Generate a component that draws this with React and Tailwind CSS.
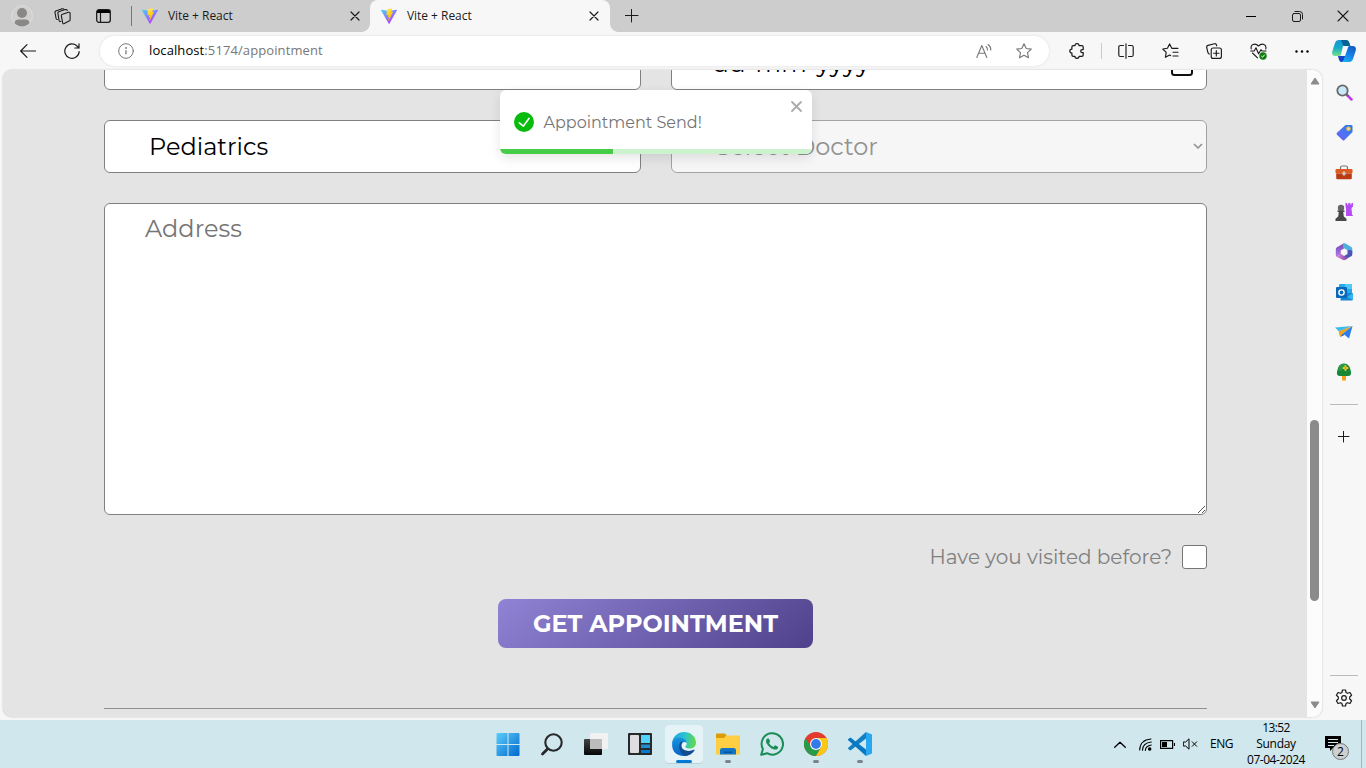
import React from "react";

const line = { fill: "none", stroke: "currentColor", strokeLinecap: "round", strokeLinejoin: "round" };

function Cell({ className = "w-11", children }) {
  return <div className={"flex shrink-0 items-center justify-center " + className}>{children}</div>;
}

function ViteLogo() {
  return (
    <svg width="16" height="16" viewBox="0 0 16 16" className="shrink-0">
      <defs>
        <linearGradient id="va" x1="0" y1="0" x2=".7" y2="1"><stop stopColor="#41d1ff" /><stop offset="1" stopColor="#bd34fe" /></linearGradient>
        <linearGradient id="vb" x1=".4" y1="0" x2=".6" y2="1"><stop stopColor="#ffea83" /><stop offset=".2" stopColor="#ffdd35" /><stop offset="1" stopColor="#ffa800" /></linearGradient>
      </defs>
      <path d="M15.9 2.4 8.5 15.6a.5.5 0 0 1-.9 0L.1 2.4a.5.5 0 0 1 .5-.7L8 3l7.400-1.300a.5.5 0 0 1 .5.7Z" fill="url(#va)" />
      <path d="M11.500.1 6 1.200a.2.2 0 0 0-.2.2l-.3 5.700c0 .2.1.3.3.2l1.500-.3-.5 2.200c0 .2.1.3.3.3l.9-.3-.7 3.400c0 .3.300.4.400.1l4.300-8.600c.1-.1 0-.3-.2-.3l-1.600.3 1-3.700c0-.2-.1-.4-.4-.3Z" fill="url(#vb)" />
    </svg>
  );
}

function X({ size = 8, w = 1.2 }) {
  return <svg width={size} height={size} viewBox="0 0 8 8" className="overflow-visible"><path d="M0 0 8 8M8 0 0 8" {...line} strokeWidth={w} /></svg>;
}

function TabStrip() {
  return (
    <div className="flex h-8 bg-[#cdcdcd] text-xs text-[#1b1b1b]">
      <Cell className="w-[44px]">
        <svg width="22" height="22" viewBox="0 0 22 22"><circle cx="11" cy="11" r="10.500" fill="#d2d0ce" stroke="#dedcd9" /><circle cx="11" cy="8" r="5" fill="#8a8886" /><path d="M3.500 18C4 15 6 14.500 8 14.500h6c2 0 4 .5 4.500 3.500A10 10 0 0 1 3.500 18Z" fill="#8a8886" /></svg>
      </Cell>
      <Cell className="w-[36px]">
        <svg width="17" height="17" viewBox="0 0 17 17" {...line} strokeWidth="1.100"><path d="m8.500 6.200 6-1.900q1.600-.4 1.600 1v6.400q0 1-1 1.400l-4.800 2.400q-1.500.7-1.700-.8L7.300 7.600q-.1-1 1.200-1.400" /><path d="M6.800 13.500q-1.500.3-1.700-1L3.900 5.300q-.1-1 .9-1.500L11 1.600q1.800-.5 2.300.9" /><path d="M3.500 11.500q-1.200.1-1.400-1L1 4.600q-.2-1 .8-1.600L7.500.900Q9 .5 9.600 1" /></svg>
      </Cell>
      <Cell className="w-[47px]">
        <svg width="15" height="14" viewBox="0 0 15 14"><rect x=".7" y=".7" width="13.600" height="12.600" rx="2.200" {...line} strokeWidth="1.300" /><path d="M1 4V2.500Q1 1 2.500 1h10Q14 1 14 2.500V4Z" /><path d="M4.500 4v9" stroke="currentColor" strokeWidth="1.200" /></svg>
      </Cell>
      <div className="flex w-[243px] items-center pl-1">
        <div className="h-5 w-px bg-[#777]" />
        <div className="ml-[10px] flex"><ViteLogo /></div>
        <span className="ml-[10px] w-[64px] font-['Open_Sans',sans-serif] tracking-[-0.04px] whitespace-nowrap">Vite + React</span>
        <span className="ml-[119px]"><X /></span>
      </div>
      <div className="relative flex w-[240px] items-center rounded-t-lg bg-[#f7f7f7] pl-[11px] before:absolute before:bottom-0 before:-left-2 before:size-2 before:bg-[radial-gradient(circle_at_0_0,#cdcdcd_7.500px,#f7f7f7_8px)] after:absolute after:-right-2 after:bottom-0 after:size-2 after:bg-[radial-gradient(circle_at_100%_0,#cdcdcd_7.500px,#f7f7f7_8px)]">
        <ViteLogo />
        <span className="ml-[10px] w-[64px] font-['Open_Sans',sans-serif] tracking-[-0.04px] whitespace-nowrap">Vite + React</span>
        <span className="ml-[119px]"><X /></span>
      </div>
      <Cell className="w-[43px]"><svg width="14" height="14" viewBox="0 0 14 14"><path d="M6.500 0v13M0 6.500h13" {...line} /></svg></Cell>
      <div className="ml-auto flex">
        <Cell className="w-[46px]"><div className="h-px w-[10px] bg-black" /></Cell>
        <Cell className="w-[46px]"><svg width="11" height="11" viewBox="0 0 11 11" {...line}><rect x=".5" y="2.500" width="8" height="8" rx="1.500" /><path d="M3 .5h4.500a3 3 0 0 1 3 3V8" /></svg></Cell>
        <Cell className="w-[46px]"><X size={10} w={0.9} /></Cell>
      </div>
    </div>
  );
}

function Toolbar() {
  return (
    <div className="flex h-[38px] items-center bg-[#f7f7f7] text-[#1b1b1b]">
      <Cell className="w-[56px]"><svg width="16" height="14" viewBox="0 0 16 14"><path d="M15.500 7H.7M7 .7.700 7 7 13.300" {...line} strokeWidth="1.200" /></svg></Cell>
      <Cell className="w-[32px]"><svg width="16" height="16" viewBox="0 0 16 16" {...line} strokeWidth="1.200"><path d="M15.200 8.500A7.200 7.200 0 1 1 13.500 3.500L15 5M15 .8V5h-4.200" /></svg></Cell>
      <div className="ml-3 flex h-[30px] w-[949px] items-center rounded-full bg-white pl-[18px] text-[#777] shadow-[0_0_3px_#ddd]">
        <svg width="16" height="16" viewBox="0 0 16 16"><circle cx="8" cy="8" r="7.300" {...line} /><path d="M8 7.200v4" stroke="currentColor" strokeWidth="1.300" /><circle cx="8" cy="5" r=".9" fill="currentColor" /></svg>
        <span className="ml-[15px] font-['Open_Sans',sans-serif] text-[13px] tracking-[0.1px]"><span className="text-black">localhost</span>:5174/appointment</span>
        <div className="ml-auto flex pr-[5px]">
          <Cell className="w-10"><svg width="16" height="16" viewBox="0 0 16 16" {...line} strokeWidth="1.100"><path d="M.8 14.500 5.800 2.500l5 12M2.600 10.300H9M10 3.500q1.500 1.300 1.500 3.500M12 1.500q3 2 2.800 5.500" /></svg></Cell>
          <Cell className="w-10"><svg width="16" height="16" viewBox="0 0 16 16" {...line} strokeWidth="1.100"><path d="m8 .8 2.200 4.700 5.100.6-3.800 3.500 1 5.200L8 12.200l-4.500 2.600 1-5.200L.7 6.100l5.100-.6Z" /></svg></Cell>
        </div>
      </div>
      <Cell className="ml-[6px] w-11"><svg width="16" height="16" viewBox="0 0 16 16" {...line} strokeWidth="1.250"><path d="M4.300 2.700h1.600a2.100 2.100 0 0 1 4.200 0h2.700q1.400 0 1.400 1.400v2.400h-.900a1.600 1.600 0 0 0 0 3.200h.9v2.200q0 1.400-1.400 1.400h-2.700a2.100 2.100 0 0 1-4.200 0H4.300q-1.400 0-1.400-1.400v-1.700a2.100 2.100 0 0 1 0-4.200V4.100q0-1.400 1.400-1.400Z" /></svg></Cell>
      <div className="ml-[2px] h-4 w-px bg-[#ccc]" />
      <Cell className="ml-[2px] w-11"><svg width="16" height="16" viewBox="0 0 16 16" {...line} strokeWidth="1.150"><path d="M5.500 2.500H2.300Q.8 2.500.8 4v8q0 1.500 1.500 1.500h3.200M10.500 2.500h3.200q1.500 0 1.500 1.500v8q0 1.500-1.500 1.500h-3.200M8 .7v14.600" /></svg></Cell>
      <Cell><svg width="17" height="16" viewBox="0 0 17 16" {...line} strokeWidth="1.150"><path d="M9.800 5.300 7.600.9 5.400 5.300.8 6l3.400 3.300-.8 5 4.200-2.300 1 .6M9.800 5.300H16M11 9.200h5M11 13h5" /></svg></Cell>
      <Cell><svg width="16" height="16" viewBox="0 0 16 16" {...line} strokeWidth="1.150"><rect x="5.200" y="5" width="10.200" height="10.400" rx="2" /><path d="M10.300 7.500v5.400M7.600 10.200H13M3.400 11Q2.500 11 2 9.800L.7 4.500Q.3 3 2 2.400L8.500.7q1.500-.3 2 1.300l.2.8" /></svg></Cell>
      <Cell><svg width="17" height="17" viewBox="0 0 17 17" className="overflow-visible"><path d="M1.200 6C.2 1.500 5-.500 8.500 3 12-.5 16.800 1.500 15.800 6M2.500 10l5 4.800M.7 8h3.500L6 4.800l2.500 6L11 6.700l1 1.300h4" {...line} strokeWidth="1.100" /><circle cx="13" cy="13" r="3.700" fill="#107c10" /><path d="m11.600 13.300.9.900 1.900-2.200" {...line} stroke="white" /></svg></Cell>
      <Cell><svg width="14" height="3" viewBox="0 0 14 3"><circle cx="1.500" cy="1.500" r="1.200" /><circle cx="7" cy="1.500" r="1.200" /><circle cx="12.500" cy="1.500" r="1.200" /></svg></Cell>
      <Cell className="w-10">
        <svg width="24" height="22" viewBox="0 0 24 22">
          <defs><linearGradient id="cp1" x1="0" y1="0" x2="0" y2="1"><stop stopColor="#1695d2" /><stop offset=".5" stopColor="#16abc8" /><stop offset="1" stopColor="#77df86" /></linearGradient><linearGradient id="cp2" x1=".8" y1="0" x2=".2" y2="1"><stop stopColor="#0e5bc2" /><stop offset=".5" stopColor="#1683e8" /><stop offset="1" stopColor="#17b9f2" /></linearGradient></defs>
          <path d="M11 6Q13 5 18.500 6L17 2Q16.300 0 14 0H7Q4 0 3 3L.4 11Q-1 16 3.500 16H7q1.500 0 2-1.500Z" fill="url(#cp1)" />
          <path d="M9 0h5q2.300 0 3 2l1.300 4h-4q-2 0-3-.2Z" fill="#076395" />
          <path d="m13 16 3-8.600Q16.500 6 18 6h2.500Q25 6 23.600 11L21 19q-1 3-4 3h-6q-3 0-3.700-3L6.500 16Z" fill="url(#cp2)" />
          <path d="M6 16h7l-1.500 4q-.7 2-2.500 2-2-.5-3-6Z" fill="#1742c7" />
        </svg>
      </Cell>
    </div>
  );
}

function Sidebar() {
  return (
    <aside className="flex w-11 flex-col items-center bg-[#f7f7f7] pt-[2px] text-[#1b1b1b]">
      <Cell className="h-10"><svg width="17" height="17" viewBox="0 0 17 17"><path d="m11.500 11.500 4 4" stroke="#c23bea" strokeWidth="2.500" strokeLinecap="round" /><path d="m10 10 2 2" stroke="#666" strokeWidth="2" /><circle cx="6.500" cy="6.500" r="5.200" fill="#c8e7fa" stroke="#686868" strokeWidth="1.800" /></svg></Cell>
      <Cell className="h-10"><svg width="17" height="17" viewBox="0 0 17 17"><defs><linearGradient id="tg" x1="1" y1="0" x2="0" y2="1"><stop stopColor="#287bf0" /><stop offset=".6" stopColor="#5172f5" /><stop offset="1" stopColor="#6958ed" /></linearGradient></defs><path d="M9.500 1h5.700Q16.500 1 16.500 2.300V8L8.500 16q-1 1-2 0L1 10.700q-1-1 0-2Z" fill="url(#tg)" /><circle cx="12.500" cy="4.700" r="1.700" fill="#ddd" stroke="#f2c318" strokeWidth="1.200" /></svg></Cell>
      <Cell className="h-10"><svg width="18" height="15" viewBox="0 0 18 15"><path d="M5.500 4V2.500Q5.500 1 7 1h4q1.500 0 1.500 1.500V4" fill="none" stroke="#777" strokeWidth="1.200" /><rect x=".5" y="4" width="17" height="4.500" rx="1" fill="#df5a20" /><path d="M1.200 8.500h15.600V13q0 1.200-1.200 1.200H2.400q-1.200 0-1.200-1.200Z" fill="#b93a13" /><rect x="7.500" y="6.500" width="3" height="4" rx="1.300" fill="#ccc" /></svg></Cell>
      <Cell className="h-10"><svg width="18" height="18" viewBox="0 0 18 18"><path d="M10.500 0h1.500v1.500h1.300V0h2v1.500h1.200V0H18v3.500L16.500 5l.5 6.500q1 .5 1 1.500h-7V5L10.500 3.500Z" fill="#b44bf4" /><circle cx="6" cy="5" r="3.200" fill="#666" /><path d="M2.500 7.500h7v1.600H8.200l.6 4.400 2.700 2.300V18H.5v-2.200l2.700-2.300.6-4.400H2.500Z" fill="#484848" /></svg></Cell>
      <Cell className="h-10">
        <svg width="18" height="18" viewBox="0 0 18 18">
          <defs><linearGradient id="m1" x1="0" y1="0" x2="0" y2="1"><stop stopColor="#6c4bb5" /><stop offset="1" stopColor="#b67be6" /></linearGradient><linearGradient id="m3" x1="0" y1="0" x2="1" y2="0"><stop stopColor="#e08ae0" /><stop offset="1" stopColor="#7a3fa8" /></linearGradient></defs>
          <path d="M9 .3 2 4.300Q.8 5 .8 6.300v6q0 1 .8 1.500L5.700 11V7.500L10.500 4.500Z" fill="url(#m1)" />
          <path d="M8 1Q9.500-.2 11 .7L16.300 4q1 .6 1 2v4L12.500 7.200 8 4.500Z" fill="#4fb0de" />
          <path d="M12.500 7v4L7 14.300l2.500 2.500 6.800-3.500q1-.6 1-2V8Q16 6.500 12.500 7Z" fill="#4c54b8" />
          <path d="m1.600 13.800 4.100-3 3.300 2.300L13 15l-2.500 1.800q-1.500.8-3 0Z" fill="url(#m3)" />
        </svg>
      </Cell>
      <Cell className="h-10"><svg width="17" height="17" viewBox="0 0 17 17"><rect x="3" width="13" height="11" rx="1" fill="#26a9e8" /><path d="M9 0h6q1 0 1 1v4H9Z" fill="#53caf5" /><path d="M5 9h12v6q0 1.500-1.500 1.500h-11Z" fill="#1587d3" /><path d="m17 9-6 4 6 3Z" fill="#34b5ed" /><rect y="3" width="11" height="11" rx="1" fill="#0768ba" /><circle cx="5.500" cy="8.500" r="2.600" fill="none" stroke="#fff" strokeWidth="1.400" /></svg></Cell>
      <Cell className="h-10"><svg width="18" height="14" viewBox="0 0 18 14"><path d="M17.500 1 0 2.500 4 6.500Z" fill="#3bbcf0" /><path d="M17.500 1 3.500 6.500 5 12l3-3.500Z" fill="#f0a41f" /><path d="M17.500 1 8 8.500l6 5Z" fill="#277ee8" /><path d="m8 8.500-3 3.500 4.500-2Z" fill="#2358b9" /></svg></Cell>
      <Cell className="h-10"><svg width="16" height="18" viewBox="0 0 16 18"><path d="M6 12h4v5.500H6Z" fill="#efa51f" /><path d="M8 .5Q14 .5 15 9q.6 4-3 4H4Q.4 13 1 9 2 .500 8 .500Z" fill="#168737" /><path d="M3 3Q7-1 10 2L5 8 2 7Z" fill="#2b9a44" /><path d="M9.500 3v4M7.500 5h4" stroke="#f4c72a" strokeWidth="2" strokeLinecap="round" /><circle cx="9.500" cy="5" r=".8" fill="#d96a16" /></svg></Cell>
      <div className="mt-[12px] h-px w-7 shrink-0 bg-[#bbb]" />
      <Cell className="mt-[12px] h-10"><svg width="12" height="12" viewBox="0 0 12 12"><path d="M5.500 0v11M0 5.500h11" {...line} /></svg></Cell>
      <div className="mt-auto h-px w-7 bg-[#bbb]" />
      <Cell className="h-11"><svg width="18" height="18" viewBox="0 0 18 18" {...line} strokeWidth="1.200"><circle cx="9" cy="9" r="2.300" /><path d="M7.500 1h3l.6 2.500 1.400.8 2.500-.8 1.600 2.800L14.700 8v2l1.900 1.700-1.600 2.800-2.500-.8-1.400.8-.6 2.500h-3l-.6-2.500-1.400-.8-2.500.8-1.600-2.800L3.300 10V8L1.400 6.300 3 3.500l2.500.8 1.400-.8Z" /></svg></Cell>
    </aside>
  );
}

function Toast() {
  return (
    <div className="absolute top-[20px] left-[497px] h-16 w-[312px] overflow-hidden rounded-md bg-white shadow-[0_4px_12px_rgba(0,0,0,0.1)]">
      <div className="flex h-16 items-center px-3.5 text-[#757575]">
        <svg width="20" height="20" viewBox="0 0 24 24" fill="#07bc0c"><path d="M12 0a12 12 0 1012 12A12.014 12.014 0 0012 0zm6.927 8.200l-6.845 9.289a1.011 1.011 0 01-1.430.188l-4.888-3.908a1 1 0 111.250-1.562l4.076 3.261 6.227-8.451a1 1 0 111.610 1.183z" /></svg>
        <span className="mt-px ml-[9.500px] text-base whitespace-nowrap">Appointment Send!</span>
        <span className="absolute top-[12px] right-[11px] flex text-[#aaa]"><X size={9} w={1.6} /></span>
      </div>
      <div className="absolute inset-x-0 bottom-0 h-[5px] bg-[#cdf2ce]"><div className="h-full w-[113px] bg-[#45cd48]" /></div>
    </div>
  );
}

function Page() {
  return (
    <div className="relative ml-[3px] flex h-[647px] w-[1319px] overflow-hidden rounded-[9px] bg-[#e4e4e4] font-[Montserrat,sans-serif] shadow-[0_0_2px_#bbb]">
      <main className="flex w-[1304px] flex-col pr-[100px] pl-[101px]">
        <div className="-mt-[33px] grid shrink-0 grid-cols-2 gap-[30px] text-2xl">
          <div className="h-[53px] rounded-md border border-[#808080] bg-white" />
          <div className="flex h-[53px] items-center justify-between rounded-md border border-[#808080] bg-white pr-[13px] pl-[41px] text-black">
            <span className="tracking-[0.4px]">dd-mm-yyyy</span>
            <svg width="22" height="24" viewBox="0 0 22 24"><rect x="1" y="3" width="20" height="20" rx="2.500" fill="none" stroke="#111" strokeWidth="2" /><path d="M1 5h20v3H1Z" /></svg>
          </div>
          <div className="flex h-[53px] items-center rounded-md border border-[#808080] bg-white pl-11 text-black">Pediatrics</div>
          <div className="flex h-[53px] items-center justify-between rounded-md border border-[#a3a3a3] bg-[#f6f6f6] pr-[3px] pl-[44px] text-[#929292]">
            <span>Select Doctor</span>
            <svg width="10" height="6" viewBox="0 0 10 6" className="-mt-px"><path d="m1 1 4 4 4-4" {...line} strokeWidth="1.700" strokeLinecap="butt" /></svg>
          </div>
        </div>
        <div className="mt-[30px] flex h-[312px] shrink-0 rounded-md border border-[#808080] bg-white pt-[9px] pl-10 text-2xl text-[#757575]">
          <span>Address</span>
          <svg width="9" height="9" viewBox="0 0 9 9" className="mt-auto ml-auto"><path d="m1 8 7-7M5 8l3-3" stroke="#444" strokeWidth=".9" /></svg>
        </div>
        <div className="mt-[29px] flex h-[26px] shrink-0 items-center justify-end text-xl text-[#808080]">
          <span>Have you visited before?</span>
          <span className="ml-[10px] h-6 w-[25px] rounded-[3px] border border-[#767676] bg-white" />
        </div>
        <button className="mt-[29px] h-[49px] w-[315px] shrink-0 self-center rounded-lg bg-[linear-gradient(140deg,#9083d5,#4f418a)] text-2xl font-bold whitespace-nowrap text-white">GET APPOINTMENT</button>
        <div className="mt-[60px] h-px shrink-0 bg-[#8f918f]" />
      </main>
      <div className="flex w-[15px] flex-col items-center bg-[#fcfcfc] pt-[7px] pb-[8px]">
        <svg width="10" height="8" viewBox="0 0 10 8"><path d="M5 1 9 7H1Z" fill="#8b8b8b" stroke="#8b8b8b" strokeLinejoin="round" /></svg>
        <div className="mt-[335px] h-[181px] w-[9px] rounded-full bg-[#8b8b8b]" />
        <svg width="10" height="8" viewBox="0 0 10 8" className="mt-auto"><path d="M5 7 9 1H1Z" fill="#8b8b8b" stroke="#8b8b8b" strokeLinejoin="round" /></svg>
      </div>
      <Toast />
    </div>
  );
}

function TaskApp({ children, running }) {
  return (
    <Cell className="relative w-11">
      {children}
      {running && <span className="absolute bottom-[5px] h-[3px] w-[6px] rounded-full bg-[#7b8589]" />}
    </Cell>
  );
}

function Taskbar() {
  return (
    <footer className="flex h-12 bg-[#cfe7ed] pl-[485.500px] text-black">
      <TaskApp><svg width="24" height="24" viewBox="0 0 24 24"><defs><linearGradient id="w" gradientUnits="userSpaceOnUse" x1="0" y1="0" x2="24" y2="24"><stop stopColor="#5fd0fa" /><stop offset="1" stopColor="#0067cf" /></linearGradient></defs><path d="M1.500 1H11.500V12H.5V2q0-1 1-1ZM12.500 1h10q1 0 1 1v10h-11ZM.5 13h11v11h-10q-1 0-1-1ZM12.500 13h11v10q0 1-1 1h-10Z" fill="url(#w)" /></svg></TaskApp>
      <TaskApp><svg width="24" height="24" viewBox="0 0 24 24" fill="none" stroke="#27272a" strokeLinecap="round"><circle cx="13.500" cy="10.500" r="8.200" strokeWidth="2.100" /><path d="m7.500 17-5 5" strokeWidth="2.800" /></svg></TaskApp>
      <TaskApp><svg width="24" height="24" viewBox="0 0 24 24"><defs><linearGradient id="tv" x1="0" y1="0" x2="0" y2="1"><stop stopColor="#444" /><stop offset="1" stopColor="#050505" /></linearGradient></defs><rect y="7" width="18" height="16" rx="1" fill="url(#tv)" /><rect x="6" y="1" width="18" height="16" rx="1" fill="#f1f1f1" /><path d="M6 7h12v10H6Z" fill="#bcbcbc" /></svg></TaskApp>
      <TaskApp><svg width="24" height="24" viewBox="0 0 24 24"><rect y="1" width="24" height="22" rx="1" fill="#27292b" /><rect x="2" y="3" width="9" height="18" rx="1" fill="#dedee2" /><path d="M13 3h9v8h-9Z" fill="#51d3fc" /><path d="M13 12.500h9V16h-9Z" fill="#218ccb" /><path d="M13 18h9v3h-9Z" fill="#0878d1" /></svg></TaskApp>
      <Cell className="relative w-11">
        <div className="flex h-[38px] w-[38px] items-center justify-center rounded-[4px] bg-[#e5f3f7] shadow-[0_1px_0_#b8d2d8]">
          <svg width="24" height="24" viewBox="0 0 24 24">
            <defs><linearGradient id="e1" x1="0" y1=".2" x2="1" y2=".3"><stop stopColor="#1aa0e6" /><stop offset=".55" stopColor="#2dc4cf" /><stop offset="1" stopColor="#63db47" /></linearGradient><linearGradient id="e2" x1="0" y1="0" x2="0" y2="1"><stop stopColor="#1593dc" /><stop offset="1" stopColor="#0a62c5" /></linearGradient></defs>
            <path d="M.1 11C1 4 6 0 12 0c7 0 12 5 12 10.500 0 4-3 6-6.500 6s-5-1.400-3.500-3c.8-1 .9-2 .5-3C13 6 4 5.500.1 11Z" fill="url(#e1)" />
            <path d="M.1 12C.2 7 5 5 9.500 6c3.500.800 5.500 3 5 5-2-2-5-.5-5.200 3 0 5 5 7.500 9.700 6.500Q16 24 12 24 0 23.500.1 12Z" fill="url(#e2)" />
            <path d="M9 9.500c-3 4-2.500 10 3 14.300 4 .5 8-1.500 10.500-5.300.4-.7-.1-1-.7-.7-5.500 2.500-12.500.5-12.500-4.300 0-1.300.3-2.500 1.200-3.500Z" fill="#124d91" />
          </svg>
        </div>
        <span className="absolute bottom-[5px] h-[3px] w-4 rounded-full bg-[#0078d4]" />
      </Cell>
      <TaskApp running><svg width="24" height="24" viewBox="0 0 24 24"><path d="M0 2.500q0-1 1-1h7q1 0 2 1l.5 1.500L9 6H0Z" fill="#dc9c08" /><path d="M10 3.500H23q1 0 1 1V22.500H0V6h8Z" fill="#ffce43" /><path d="M4 22.500v-4.500Q4 16 6.500 16h11q2.500 0 2.500 2v4.500Z" fill="#1174c7" /><path d="M8 19.500h8v1.500H8Z" fill="#08569d" /></svg></TaskApp>
      <TaskApp><svg width="24" height="24" viewBox="0 0 24 24" fill="#1b8c56"><path d="M17.472 14.382c-.297-.149-1.758-.867-2.030-.967-.273-.099-.471-.148-.670.150-.197.297-.767.966-.940 1.164-.173.199-.347.223-.644.075-.297-.150-1.255-.463-2.390-1.475-.883-.788-1.480-1.761-1.653-2.059-.173-.297-.018-.458.130-.606.134-.133.298-.347.446-.520.149-.174.198-.298.298-.497.099-.198.050-.371-.025-.520-.075-.149-.669-1.612-.916-2.207-.242-.579-.487-.500-.669-.510-.173-.008-.371-.010-.570-.010-.198 0-.520.074-.792.372-.272.297-1.040 1.016-1.040 2.479 0 1.462 1.065 2.875 1.213 3.074.149.198 2.096 3.200 5.077 4.487.709.306 1.262.489 1.694.625.712.227 1.360.195 1.871.118.571-.085 1.758-.719 2.006-1.413.248-.694.248-1.289.173-1.413-.074-.124-.272-.198-.570-.347Z" /><path d="M1.200 22.900 2.900 17A10.700 10.700 0 1 1 7 21.200Z" fill="none" stroke="#1b8c56" strokeWidth="2" strokeLinejoin="round" /></svg></TaskApp>
      <TaskApp running><svg width="24" height="24" viewBox="0 0 24 24"><circle cx="12" cy="12" r="12" fill="#e33b2e" /><path d="M1.600 6A12 12 0 0 0 12 24l5-9H6.800Z" fill="#269b4a" /><path d="M12 6h10.400A12 12 0 0 1 12 24l5.200-9Z" fill="#fbc816" /><circle cx="12" cy="12" r="6" fill="white" /><circle cx="12" cy="12" r="4.900" fill="#347be9" /></svg></TaskApp>
      <TaskApp running><svg width="24" height="24" viewBox="0 0 24 24"><path d="M18 0 24 2.500v19L18 24Z" fill="#28a8f2" /><path d="M18 0v6.500L2.500 18.500.3 17q-.6-.7 0-1.300Z" fill="#147fc3" /><path d="M18 24v-6.500L2.500 5.500.3 7q-.6.700 0 1.300Z" fill="#0878c3" /></svg></TaskApp>
      <div className="ml-auto flex w-[264px] items-center font-['Open_Sans',sans-serif] text-xs">
        <Cell className="w-[36px]"><svg width="12" height="7" viewBox="0 0 12 7"><path d="m.7 6.300 5.300-5 5.300 5" {...line} strokeWidth="1.300" /></svg></Cell>
        <Cell className="mt-px w-[14px]"><svg width="13" height="13" viewBox="0 0 13 13" {...line} strokeWidth="1.100"><path d="M.7 12Q1 2 12 1M3.500 12.300Q3.500 5 12.300 4M6.300 12.500Q6.500 8 12.300 7" /><circle cx="10.700" cy="11" r="1.200" fill="black" /></svg></Cell>
        <Cell className="w-[31px]"><svg width="15" height="9" viewBox="0 0 15 9"><path d="M.6.600h12v7.800H.6ZM14.500 3v3" fill="none" stroke="black" strokeWidth="1.200" /><path d="M2 2h5v5H2Z" /></svg></Cell>
        <Cell className="w-[15px]"><svg width="15" height="12" viewBox="0 0 15 12" {...line}><path d="M.7 4h2L6 .8v10.400L2.700 8h-2ZM9.200 3.800l4.500 4.500M13.700 3.800 9.200 8.300" /></svg></Cell>
        <span className="ml-[12px] w-[24px] tracking-[-0.5px]">ENG</span>
        <div className="ml-[9px] flex w-[66px] flex-col items-center text-xs leading-4 whitespace-nowrap"><span className="tracking-[-0.65px]">13:52</span><span className="tracking-[-0.3px]">Sunday</span><span className="tracking-[-0.48px]">07-04-2024</span></div>
        <div className="relative ml-[16px] h-[16px] w-[17px]">
          <svg width="17" height="15" viewBox="0 0 17 15"><path d="M0 0h16v12H8l-3 3v-3H0Z" /><path d="M3 3.500h10M3 6.500h10M3 9.500h6" stroke="#cfe7ed" /></svg>
          <span className="absolute top-[7px] left-[7px] flex size-[17px] items-center justify-center rounded-full border border-[#777] bg-[#ccd0d2] text-xs">2</span>
        </div>
        <div className="mr-[4px] ml-auto h-full w-px bg-[#9eb8be]" />
      </div>
    </footer>
  );
}

export default function App() {
  return (
    <div className="h-[768px] w-[1366px] overflow-hidden bg-[#f7f7f7]">
      <TabStrip />
      <Toolbar />
      <div className="flex h-[650px]">
        <Page />
        <Sidebar />
      </div>
      <Taskbar />
    </div>
  );
}
